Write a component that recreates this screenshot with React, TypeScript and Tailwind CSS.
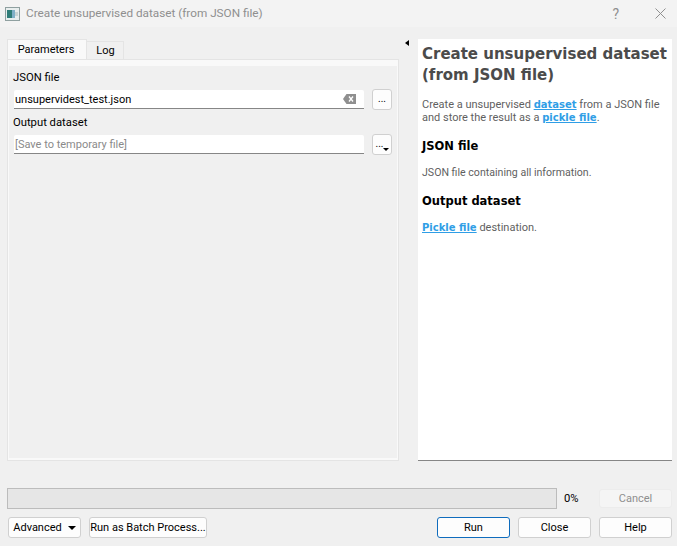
const ui = { fontFamily: 'Roboto, sans-serif' };
const head = { fontFamily: '"DejaVu Sans", sans-serif' };

function Btn({ children, className = '' }: { children: React.ReactNode; className?: string }) {
  return (
    <button className={`h-[21px] flex items-center justify-center whitespace-nowrap bg-[#fdfdfd] border border-[#d0d0d0] rounded-[3px] text-[11px] text-black ${className}`}>
      {children}
    </button>
  );
}

function Field({ children }: { children: React.ReactNode }) {
  return (
    <div className="flex-1 h-[19px] bg-white rounded-t-[2px] border-b border-[#868686] flex items-center pl-[1px] pr-[8px] text-[11px]">
      {children}
    </div>
  );
}

function Link({ children }: { children: React.ReactNode }) {
  return (
    <span className="font-bold underline text-[#2f9ee6] text-[10px]" style={head}>
      {children}
    </span>
  );
}

export default function App() {
  return (
    <div className="w-[677px] h-[546px] bg-[#f0f0f0] flex flex-col overflow-hidden" style={ui}>
      <div className="h-[27px] bg-[#f3f3f3] flex items-center pl-[5px] pr-[11px] text-[#8f8f8f] shrink-0">
        <svg width="15" height="14" viewBox="0 0 15 14" className="mr-[6px]">
          <rect x="0.5" y="0.5" width="14" height="13" fill="#e8eeee" stroke="#8fa0a0" />
          <rect x="2" y="3" width="5" height="8" fill="#2f7d78" />
          <rect x="7" y="3" width="3" height="8" fill="#7fb0c8" />
          <rect x="10" y="5" width="3" height="4" fill="#c8d4d4" />
        </svg>
        <span className="text-[11.75px] leading-none">Create unsupervised dataset (from JSON file)</span>
        <span className="ml-auto mr-[36px] text-[14px] leading-none">?</span>
        <svg width="11" height="11" viewBox="0 0 11 11" stroke="#8f8f8f" fill="none">
          <path d="M0.5 0.5 L10.5 10.5 M10.5 0.5 L0.5 10.5" />
        </svg>
      </div>

      <div className="flex pt-[12px] pl-[7px] pr-[5px] h-[434px] shrink-0">
        <div className="w-[392px] flex flex-col">
          <div className="flex h-[20px] items-end text-[11px] text-black">
            <div className="h-[20px] w-[80px] bg-[#f9f9f9] border border-b-0 border-[#e4e4e4] flex items-center justify-center pt-[1px] pr-[2px]">
              Parameters
            </div>
            <div className="h-[18px] w-[37px] bg-[#f0f0f0] border border-b-0 border-l-0 border-[#e4e4e4] flex items-center justify-center pt-[1px] pl-[1px]">
              Log
            </div>
          </div>
          <div className="flex-1 bg-[#f9f9f9] border border-[#e4e4e4] pt-[6px] px-[1px] pb-[2px]">
            <div className="bg-[#f0f0f0] h-full pl-[4px] pr-[5px] text-[11.25px] text-black">
              <div className="h-[23px] pt-[4px] leading-[15px]">JSON file</div>
              <div className="flex items-center pl-[1px]">
                <Field>
                  <span className="pt-[3px]">unsupervidest_test.json</span>
                  <svg width="13" height="10" viewBox="0 0 13 10" className="ml-auto">
                    <path d="M3.5 0 H13 V10 H3.5 L0 5 Z" fill="#8f8f8f" />
                    <path d="M6 2.5 L10 7.5 M10 2.5 L6 7.5" stroke="#fff" strokeWidth="1.3" />
                  </svg>
                </Field>
                <Btn className="w-[20px] h-[17px] ml-[8px] pb-[2px]">
                  <span className="text-[10px] leading-none">...</span>
                </Btn>
              </div>
              <div className="h-[24px] pt-[5px] leading-[15px]">Output dataset</div>
              <div className="flex items-center pl-[1px]">
                <Field>
                  <span className="pt-[3px] text-[#8a8a8a]">[Save to temporary file]</span>
                </Field>
                <Btn className="w-[20px] h-[18px] ml-[8px] relative pb-[2px] pr-[5px]">
                  <span className="text-[10px] leading-none">...</span>
                  <span className="absolute right-[2px] bottom-[3px] w-0 h-0 border-l-[3px] border-r-[3px] border-t-[3px] border-l-transparent border-r-transparent border-t-black" />
                </Btn>
              </div>
            </div>
          </div>
        </div>

        <div className="w-[19px] flex pt-[1px] pl-[6px]">
          <span className="w-0 h-0 border-t-[3px] border-b-[3px] border-r-[4px] border-t-transparent border-b-transparent border-r-black" />
        </div>

        <div className="w-[254px] bg-white border-b border-[#868686] pl-[4px] pr-[2px] pt-[5px] text-[#5f5f5f] text-[11px]">
          <h1 className="text-[15px] leading-[21px] font-bold text-[#4b4b4b] whitespace-nowrap" style={head}>
            Create unsupervised dataset
            <br />
            (from JSON file)
          </h1>
          <p className="mt-[12px] leading-[13px] whitespace-nowrap">
            Create a unsupervised <Link>dataset</Link> from a JSON file
            <br />
            and store the result as a <Link>pickle file</Link>.
          </p>
          <h2 className="mt-[14px] text-black font-bold text-[11.5px] leading-[16px]" style={head}>
            JSON file
          </h2>
          <p className="mt-[11px] leading-[15px] text-[10.6px]">JSON file containing all information.</p>
          <h2 className="mt-[13px] text-black font-bold text-[11.5px] leading-[16px]" style={head}>
            Output dataset
          </h2>
          <p className="mt-[11px] leading-[15px]">
            <Link>Pickle file</Link> destination.
          </p>
        </div>
      </div>

      <div className="flex items-center pl-[7px] pr-[5px] mt-[27px] h-[21px] shrink-0">
        <div className="w-[550px] h-[21px] bg-[#e6e6e6] border border-[#bcbcbc]" />
        <span className="w-[42px] pl-[7px] pt-[2px] text-[11.25px] text-black">0%</span>
        <button className="w-[73px] h-[19px] pt-[1px] bg-[#f5f5f5] rounded-[3px] border border-[#ececec] text-[11px] text-[#8f8f8f] flex items-center justify-center">
          Cancel
        </button>
      </div>

      <div className="flex items-center pl-[8px] pr-[5px] mt-[8px] h-[21px] shrink-0">
        <Btn className="w-[73px] gap-[6px] pt-[1px]">
          <span>Advanced</span>
          <span className="w-0 h-0 border-l-[4px] border-r-[4px] border-t-[4px] border-l-transparent border-r-transparent border-t-black" />
        </Btn>
        <Btn className="w-[118px] ml-[8px] pt-[1px]">Run as Batch Process...</Btn>
        <Btn className="w-[73px] ml-auto pt-[1px] !border-[#0f6cbd]">Run</Btn>
        <Btn className="w-[73px] ml-[8px] pt-[1px]">Close</Btn>
        <Btn className="w-[73px] ml-[8px] pt-[1px]">Help</Btn>
      </div>
    </div>
  );
}
